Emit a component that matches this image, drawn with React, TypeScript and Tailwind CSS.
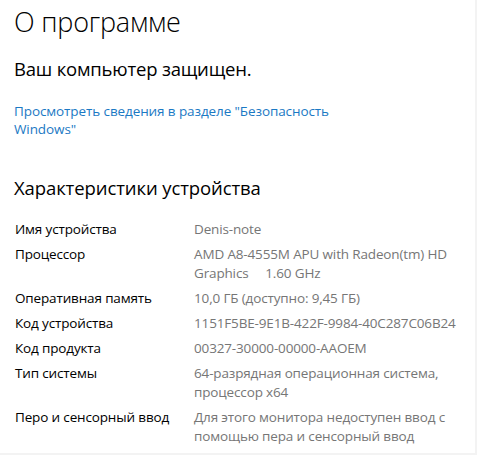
import React from "react";

const specs: { label: string; value: React.ReactNode }[] = [
  { label: "Имя устройства", value: "Denis-note" },
  {
    label: "Процессор",
    value: (
      <>
        AMD A8-4555M APU with Radeon(tm) HD
        <br />
        Graphics&nbsp;&nbsp;&nbsp;&nbsp; 1.60 GHz
      </>
    ),
  },
  { label: "Оперативная память", value: "10,0 ГБ (доступно: 9,45 ГБ)" },
  { label: "Код устройства", value: "1151F5BE-9E1B-422F-9984-40C287C06B24" },
  { label: "Код продукта", value: "00327-30000-00000-AAOEM" },
  {
    label: "Тип системы",
    value: (
      <>
        64-разрядная операционная система,
        <br />
        процессор x64
      </>
    ),
  },
  {
    label: "Перо и сенсорный ввод",
    value: (
      <>
        Для этого монитора недоступен ввод с
        <br />
        помощью пера и сенсорный ввод
      </>
    ),
  },
];

export default function App() {
  return (
    <div
      className="w-[477px] h-[455px] overflow-hidden bg-white border-r-2 border-b-2 border-[#f3f3f3] pl-[14px] pt-[4px]"
      style={{ fontFamily: '"Segoe UI", "Open Sans", "Noto Sans", sans-serif' }}
    >
      <h1 className="text-[27px] font-light leading-[36px] tracking-[-0.2px] text-black">О программе</h1>

      <p className="mt-[16px] text-[18.5px] leading-[26px] tracking-[-0.2px] text-black">Ваш компьютер защищен.</p>

      <a className="mt-[20px] block text-[13.5px] leading-[18px] tracking-[-0.1px] text-[#1b79c4] whitespace-nowrap">
        Просмотреть сведения в разделе "Безопасность
        <br />
        Windows"
      </a>

      <h2 className="mt-[37px] text-[18.5px] leading-[26px] tracking-[-0.1px] text-black">Характеристики устройства</h2>

      <div className="mt-[19px] flex flex-col gap-[6px] text-[13.5px] leading-[19px] tracking-[-0.15px]">
        {specs.map((s) => (
          <div key={s.label} className="flex">
            <div className="w-[180px] shrink-0 pl-[1px] text-black whitespace-nowrap">{s.label}</div>
            <div className="text-[#767676] whitespace-nowrap">{s.value}</div>
          </div>
        ))}
      </div>
    </div>
  );
}
